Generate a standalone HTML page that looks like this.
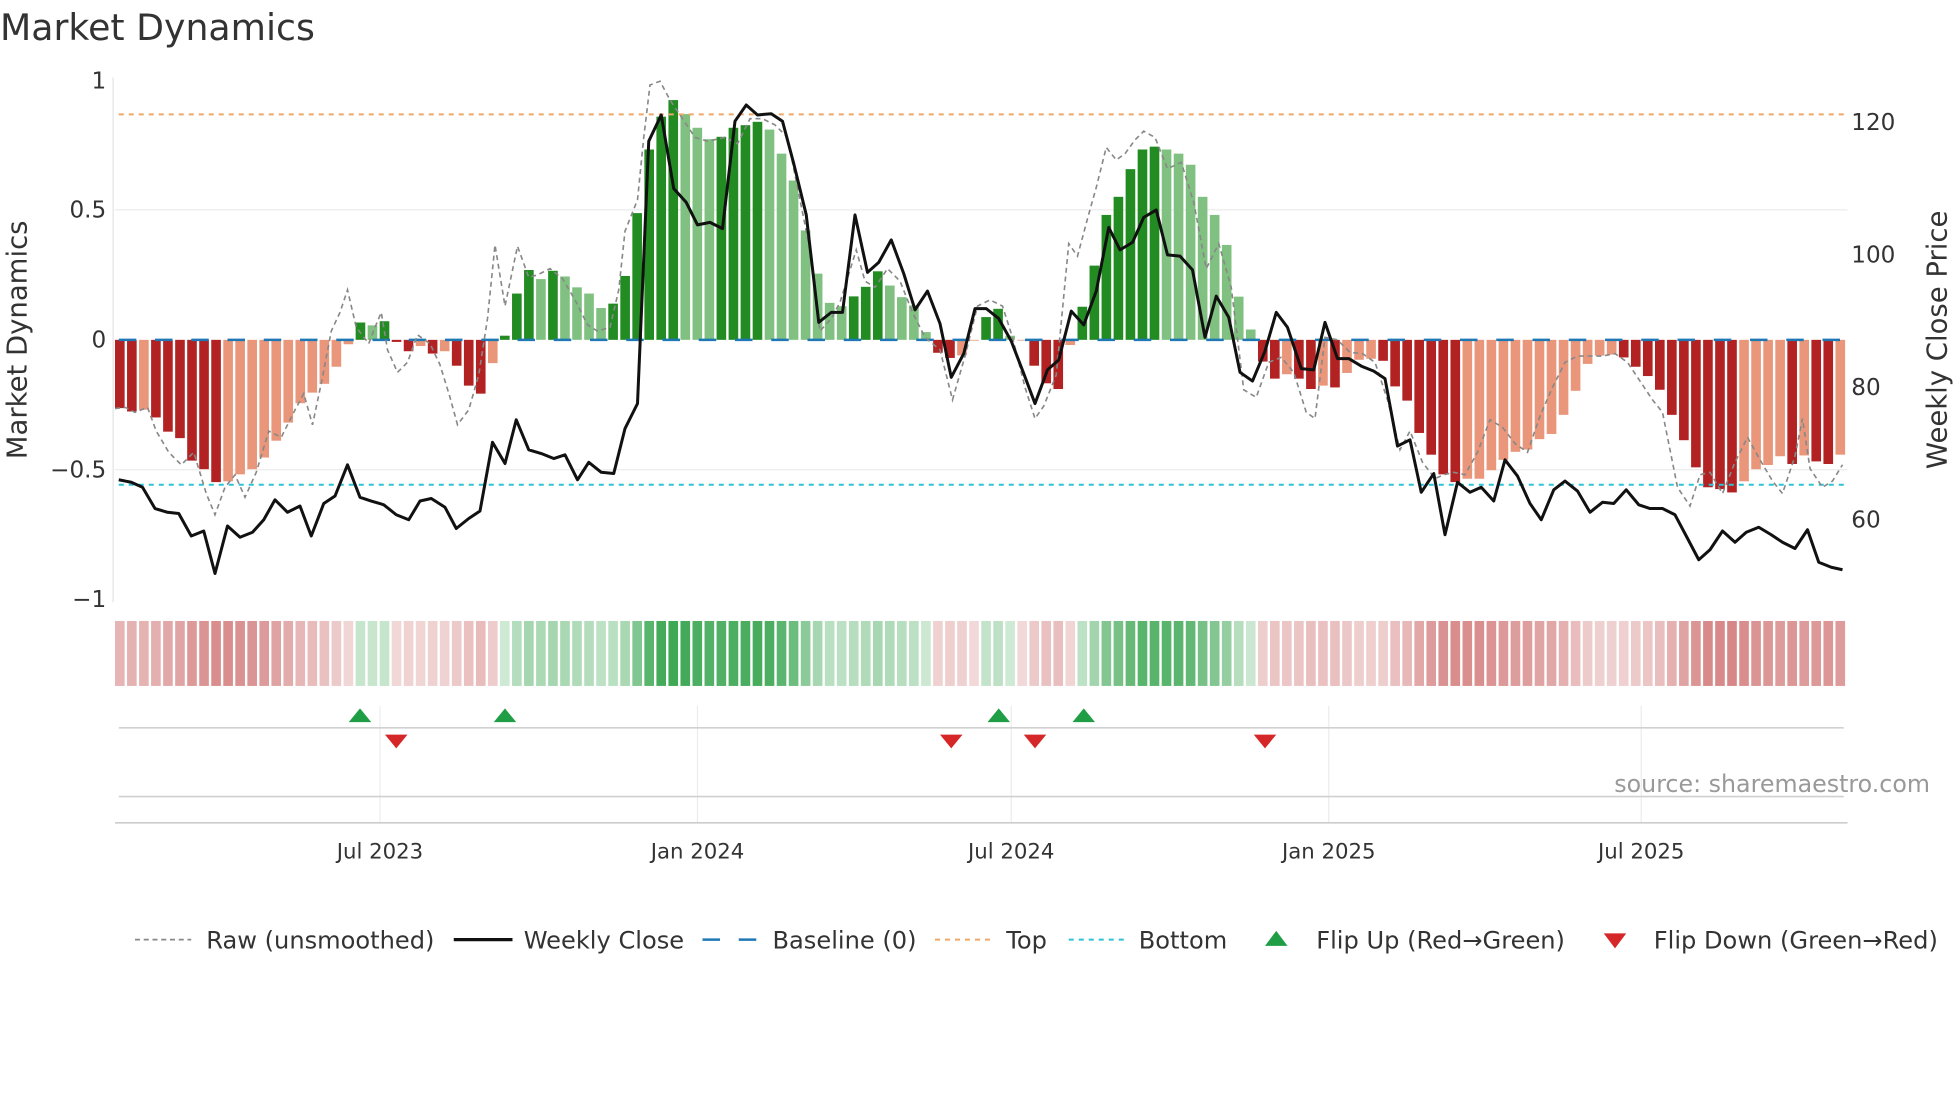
<!DOCTYPE html>
<html><head><meta charset="utf-8">
<style>
html,body{margin:0;padding:0;background:#fff;}
svg{display:block;}
text{font-family:"DejaVu Sans","Liberation Sans",sans-serif;}
</style></head>
<body>
<svg id="s" width="1960" height="1102" viewBox="0 0 1568 882" preserveAspectRatio="none" xmlns="http://www.w3.org/2000/svg">
<rect width="1568" height="882" fill="#fff"/>
<text x="0" y="32" font-size="29" fill="#333">Market Dynamics</text>
<!-- grid -->
<line x1="92" y1="168" x2="1478" y2="168" stroke="#ececec" stroke-width="1"/>
<line x1="92" y1="376" x2="1478" y2="376" stroke="#ececec" stroke-width="1"/>
<line x1="90.5" y1="62" x2="90.5" y2="482" stroke="#e4e4e8" stroke-width="1"/>
<g id="bars"></g>
<line x1="95" y1="272" x2="1478" y2="272" stroke="#1f77b4" stroke-width="2" stroke-dasharray="14,15"/>
<line x1="95" y1="91.5" x2="1476" y2="91.5" stroke="#f0a868" stroke-width="1.6" stroke-dasharray="4,4"/>
<line x1="95" y1="388" x2="1476" y2="388" stroke="#2cc3d6" stroke-width="1.6" stroke-dasharray="4,4"/>
<polyline id="raw" fill="none" stroke="#888" stroke-width="1.3" stroke-dasharray="4,3"/>
<polyline id="px" fill="none" stroke="#111" stroke-width="2.4" stroke-linejoin="round"/>
<!-- left axis labels -->
<g font-size="18.5" fill="#333" text-anchor="end">
<text x="85" y="71">1</text>
<text x="85" y="174">0.5</text>
<text x="85" y="278">0</text>
<text x="85" y="382">−0.5</text>
<text x="85" y="486">−1</text>
</g>
<g font-size="18.5" fill="#333">
<text x="1481" y="104">120</text>
<text x="1481" y="210">100</text>
<text x="1481" y="316">80</text>
<text x="1481" y="422">60</text>
</g>
<text transform="translate(21,272) rotate(-90)" font-size="22" fill="#333" text-anchor="middle">Market Dynamics</text>
<text transform="translate(1557,272) rotate(-90)" font-size="22" fill="#333" text-anchor="middle">Weekly Close Price</text>
<g id="strip"></g>
<!-- lower panel -->
<g stroke="#ececec" stroke-width="1">
<line x1="304" y1="565" x2="304" y2="658"/>
<line x1="558" y1="565" x2="558" y2="658"/>
<line x1="809" y1="565" x2="809" y2="658"/>
<line x1="1063" y1="565" x2="1063" y2="658"/>
<line x1="1313" y1="565" x2="1313" y2="658"/>
</g>
<line x1="95" y1="582.5" x2="1475" y2="582.5" stroke="#d0d0d0" stroke-width="1.3"/>
<line x1="95" y1="637.5" x2="1475" y2="637.5" stroke="#d0d0d0" stroke-width="1.3"/>
<line x1="92" y1="658.5" x2="1478" y2="658.5" stroke="#ccc" stroke-width="1.3"/>
<g fill="#1f9e46">
<polygon points="279,578 297,578 288,567"/>
<polygon points="395,578 413,578 404,567"/>
<polygon points="790,578 808,578 799,567"/>
<polygon points="858,578 876,578 867,567"/>
</g>
<g fill="#d62728">
<polygon points="308,588 326,588 317,599"/>
<polygon points="752,588 770,588 761,599"/>
<polygon points="819,588 837,588 828,599"/>
<polygon points="1003,588 1021,588 1012,599"/>
</g>
<text x="1544" y="634" font-size="19" fill="#999" text-anchor="end">source: sharemaestro.com</text>
<g font-size="17" fill="#333" text-anchor="middle">
<text x="304" y="687">Jul 2023</text>
<text x="558" y="687">Jan 2024</text>
<text x="809" y="687">Jul 2024</text>
<text x="1063" y="687">Jan 2025</text>
<text x="1313" y="687">Jul 2025</text>
</g>
<!-- legend -->
<g font-size="19.3" fill="#333">
<line x1="108" y1="752" x2="153" y2="752" stroke="#888" stroke-width="1.4" stroke-dasharray="4,3"/>
<text x="165" y="759">Raw (unsmoothed)</text>
<line x1="363" y1="752" x2="410" y2="752" stroke="#111" stroke-width="2.6"/>
<text x="419" y="759">Weekly Close</text>
<line x1="562" y1="752" x2="607" y2="752" stroke="#1f77b4" stroke-width="2" stroke-dasharray="14,15"/>
<text x="618" y="759">Baseline (0)</text>
<line x1="748" y1="752" x2="793" y2="752" stroke="#f0a868" stroke-width="1.6" stroke-dasharray="4,4"/>
<text x="805" y="759">Top</text>
<line x1="855" y1="752" x2="900" y2="752" stroke="#2cc3d6" stroke-width="1.6" stroke-dasharray="4,4"/>
<text x="911" y="759">Bottom</text>
<polygon points="1012,757 1030,757 1021,745" fill="#1f9e46"/>
<text x="1053" y="759">Flip Up (Red→Green)</text>
<polygon points="1283,747 1301,747 1292,759" fill="#d62728"/>
<text x="1323" y="759">Flip Down (Green→Red)</text>
</g>
</svg>
<script>
var d="D-.264 D-.277 L-.27 D-.3 D-.355 D-.38 D-.467 D-.5 D-.55 L-.547 L-.52 L-.5 L-.455 L-.39 L-.32 L-.245 L-.204 L-.17 L-.104 L-.017 G.067 g.056 G.072 D-.008 D-.044 L-.024 D-.053 L-.044 D-.1 D-.177 D-.208 L-.09 G.016 G.179 G.27 g.235 G.267 g.245 g.203 g.179 g.123 G.14 G.247 G.49 G.736 G.863 G.927 g.873 "+
"g.82 g.776 G.785 G.82 G.83 G.843 g.813 g.72 g.616 g.423 g.256 g.143 g.13 G.168 G.205 G.265 g.21 g.165 g.133 g.03 D-.05 D-.07 L-.06 L-.003 G.088 G.12 g.016 L-.003 D-.1 D-.168 D-.19 L-.02 G.128 G.287 G.483 G.553 G.66 G.736 G.747 g.736 g.72 g.677 g.553 g.483 g.367 g.167 g.04 D-.084 D-.15 L-.133 "+
"D-.15 D-.19 L-.177 D-.184 L-.128 L-.077 L-.073 D-.081 D-.18 D-.235 D-.36 D-.444 D-.52 D-.55 L-.537 L-.537 L-.504 L-.464 L-.433 L-.424 L-.384 L-.364 L-.29 L-.197 L-.093 L-.061 L-.057 D-.068 D-.104 D-.14 D-.193 D-.29 D-.388 D-.493 D-.57 D-.577 D-.59 L-.547 L-.5 L-.484 L-.45 D-.48 L-.447 D-.47 D-.48 L-.444";
var items=d.trim().split(/\s+/);var n=items.length;var p=(1478-92)/n,w=p*0.8;
var col={D:"#b22222",L:"#e9967a",G:"#228b22",g:"#80c080"};
var b="",st="";
items.forEach(function(it,i){var c=it[0],v=parseFloat(it.slice(1));var x=92+i*p;
var y=272-v*207;var top=Math.min(y,272),h=Math.abs(y-272);
b+='<rect x="'+x.toFixed(2)+'" y="'+top.toFixed(2)+'" width="'+w.toFixed(2)+'" height="'+Math.max(h,0.6).toFixed(2)+'" fill="'+col[c]+'"/>';
var a,r,gg,bb;if(v>=0){a=0.22+0.7*Math.min(1,v/0.9);r=46;gg=160;bb=70;}else{a=0.2+0.42*Math.min(1,-v/0.6);r=190;gg=60;bb=60;}
var R=Math.round(255-(255-r)*a),Gc=Math.round(255-(255-gg)*a),B=Math.round(255-(255-bb)*a);
st+='<rect x="'+x.toFixed(2)+'" y="497" width="'+w.toFixed(2)+'" height="52" fill="rgb('+R+','+Gc+','+B+')"/>';
});
document.getElementById("bars").innerHTML=b;document.getElementById("strip").innerHTML=st;
document.getElementById("px").setAttribute("points","95,384 105,386 114,390 124,407 134,410 143,411 153,429 163,425 172,459 182,421 192,430 202,426 211,416 220,400 230,410 240,405 249,429 259,403 268,397 278,372 288,398 297,401 307,404 317,412 327,416 336,401 345,399 356,406 365,423 375,415 384,409 394,354 404,371 413,336 423,360 433,363 443,367 452,364 462,384 471,370 481,378 491,379 500,343 510,323 519,113 529,92 539,151 549,162 558,180 568,178 578,183 588,97 597,84 606,92 617,91 626,97 635,131 645,172 655,258 665,250 674,250 684,172 694,218 703,210 713,192 723,219 732,248 742,233 752,259 761,302 771,283 780,247 789,247 799,255 809,273 819,299 828,323 838,296 847,288 857,249 867,260 877,233 887,182 896,200 906,194 915,174 925,168 934,204 944,205 954,216 964,270 973,237 983,254 992,298 1002,305 1012,281 1021,250 1030,262 1041,295 1051,296 1060,258 1070,287 1079,287 1089,293 1099,297 1108,303 1118,357 1128,352 1137,394 1147,379 1156,428 1166,386 1176,394 1185,390 1195,401 1204,368 1214,381 1224,403 1233,416 1243,392 1252,385 1262,393 1272,410 1282,402 1291,403 1301,392 1311,404 1320,407 1330,407 1340,412 1349,429 1359,448 1368,440 1378,425 1388,434 1397,426 1407,422 1417,428 1426,434 1436,439 1446,424 1455,450 1465,454 1474,456");
document.getElementById("raw").setAttribute("points","92,327 100,326 108,330 118,326 125,345 135,362 145,372 155,362 165,395 172,412 180,390 188,380 196,398 205,378 215,345 225,350 235,330 243,315 250,340 258,302 265,265 272,250 278,232 285,262 295,275 300,262 305,250 310,280 318,298 326,290 334,268 344,275 352,292 360,318 366,340 375,328 383,300 390,255 396,196 404,245 414,197 423,222 430,220 440,215 450,223 460,240 470,260 478,265 488,262 495,232 500,185 510,160 515,110 520,68 528,65 536,80 546,95 556,110 566,113 580,110 590,115 600,95 610,95 620,100 630,110 640,160 648,200 656,265 665,255 672,242 685,200 692,225 700,230 710,215 720,225 730,250 740,270 752,280 762,320 772,285 782,245 792,240 802,245 810,270 820,310 828,335 835,325 845,300 855,195 862,205 870,175 877,150 885,118 893,128 900,123 908,112 915,105 924,110 934,135 945,130 955,162 965,215 975,195 985,230 995,312 1005,318 1015,290 1025,286 1035,298 1045,330 1052,335 1060,270 1070,272 1080,282 1090,283 1100,290 1110,320 1120,360 1128,345 1138,370 1148,383 1155,380 1163,378 1172,380 1182,362 1192,336 1202,342 1212,355 1222,362 1232,333 1242,310 1252,290 1262,285 1272,285 1282,285 1292,283 1302,290 1312,305 1322,320 1330,330 1342,390 1352,405 1360,380 1368,378 1378,395 1388,370 1398,350 1408,368 1418,385 1426,395 1436,365 1442,335 1448,375 1458,390 1466,385 1474,372");
</script>
</body></html>
